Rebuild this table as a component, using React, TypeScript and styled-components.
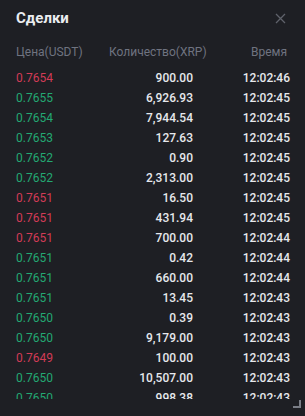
import React from 'react';
import styled, { createGlobalStyle } from 'styled-components';

const GlobalStyle = createGlobalStyle`
  html, body {
    margin: 0;
    padding: 0;
    background: #1e1f24;
  }
  body {
    font-family: Roboto, "Noto Sans", "DejaVu Sans", sans-serif;
  }
`;

const Panel = styled.div`
  position: relative;
  width: 305px;
  height: 416px;
  background: #1e1f24;
  display: flex;
  flex-direction: column;
  overflow: hidden;
`;

const TitleBar = styled.div`
  height: 36px;
  display: flex;
  align-items: center;
  justify-content: space-between;
  padding: 0 19px 0 16px;
`;

const Title = styled.div`
  color: #eaecef;
  font-size: 15px;
  font-weight: 700;
`;

const CloseButton = styled.div`
  width: 12px;
  height: 12px;
  display: flex;
  align-items: center;
  justify-content: center;
  cursor: pointer;
`;

const Columns = styled.div`
  display: grid;
  grid-template-columns: 93px 95px 1fr;
  padding: 0 18px 0 16px;
`;

const HeaderRow = styled(Columns)`
  height: 32px;
  align-items: center;
  color: #6f7380;
  font-size: 12px;
`;

const HeadCell = styled.div<{ $align: 'left' | 'right' }>`
  text-align: ${(p) => p.$align};
  white-space: nowrap;
`;

const List = styled.div`
  height: 331px;
  overflow-y: scroll;

  &::-webkit-scrollbar {
    width: 4px;
  }
  &::-webkit-scrollbar-track {
    background: transparent;
  }
  &::-webkit-scrollbar-thumb {
    background: #4a4d56;
    border-radius: 2px;
  }
`;

const Row = styled(Columns)`
  height: 20px;
  align-items: center;
  font-size: 12px;
  padding-right: 15px;
`;

const Price = styled.div<{ $up: boolean }>`
  color: ${(p) => (p.$up ? '#23a872' : '#d23b56')};
`;

const Qty = styled.div`
  color: #e6e8ec;
  font-weight: 500;
  text-align: right;
  margin-right: 11px;
`;

const Time = styled.div`
  color: #e6e8ec;
  font-weight: 500;
  text-align: right;
`;

const ResizeCorner = styled.svg`
  position: absolute;
  right: 4px;
  bottom: 8px;
`;

type Trade = { price: string; up: boolean; qty: string; time: string };

const visible: Trade[] = [
  { price: '0.7654', up: false, qty: '900.00', time: '12:02:46' },
  { price: '0.7655', up: true, qty: '6,926.93', time: '12:02:45' },
  { price: '0.7654', up: true, qty: '7,944.54', time: '12:02:45' },
  { price: '0.7653', up: true, qty: '127.63', time: '12:02:45' },
  { price: '0.7652', up: true, qty: '0.90', time: '12:02:45' },
  { price: '0.7652', up: true, qty: '2,313.00', time: '12:02:45' },
  { price: '0.7651', up: false, qty: '16.50', time: '12:02:45' },
  { price: '0.7651', up: false, qty: '431.94', time: '12:02:45' },
  { price: '0.7651', up: false, qty: '700.00', time: '12:02:44' },
  { price: '0.7651', up: true, qty: '0.42', time: '12:02:44' },
  { price: '0.7651', up: true, qty: '660.00', time: '12:02:44' },
  { price: '0.7651', up: true, qty: '13.45', time: '12:02:43' },
  { price: '0.7650', up: true, qty: '0.39', time: '12:02:43' },
  { price: '0.7650', up: true, qty: '9,179.00', time: '12:02:43' },
  { price: '0.7649', up: false, qty: '100.00', time: '12:02:43' },
  { price: '0.7650', up: true, qty: '10,507.00', time: '12:02:43' },
  { price: '0.7650', up: true, qty: '998.38', time: '12:02:43' },
];

// older trades below the fold, only there to give the scrollbar its size
const older: Trade[] = Array.from({ length: 43 }, (_, i) => ({
  price: (0.7649 - (i % 4) * 0.0001).toFixed(4),
  up: i % 3 !== 0,
  qty: ((i * 137.31) % 2400).toFixed(2),
  time: `12:02:${String(42 - Math.floor(i / 4)).padStart(2, '0')}`,
}));

const trades = [...visible, ...older];

const App = () => {
  return (
    <Panel>
      <GlobalStyle />
      <TitleBar>
        <Title>Сделки</Title>
        <CloseButton>
          <svg width="11" height="11" viewBox="0 0 11 11">
            <path d="M1 1 L10 10 M10 1 L1 10" stroke="#5f626b" strokeWidth="1.3" />
          </svg>
        </CloseButton>
      </TitleBar>
      <HeaderRow>
        <HeadCell $align="left">Цена(USDT)</HeadCell>
        <HeadCell $align="left">Количество(XRP)</HeadCell>
        <HeadCell $align="right">Время</HeadCell>
      </HeaderRow>
      <List>
        {trades.map((t, i) => (
          <Row key={i}>
            <Price $up={t.up}>{t.price}</Price>
            <Qty>{t.qty}</Qty>
            <Time>{t.time}</Time>
          </Row>
        ))}
      </List>
      <ResizeCorner width="8" height="8" viewBox="0 0 8 8">
        <path d="M7 0 V7 H0" stroke="#7a7d86" strokeWidth="2" fill="none" />
      </ResizeCorner>
    </Panel>
  );
};

export default App;
